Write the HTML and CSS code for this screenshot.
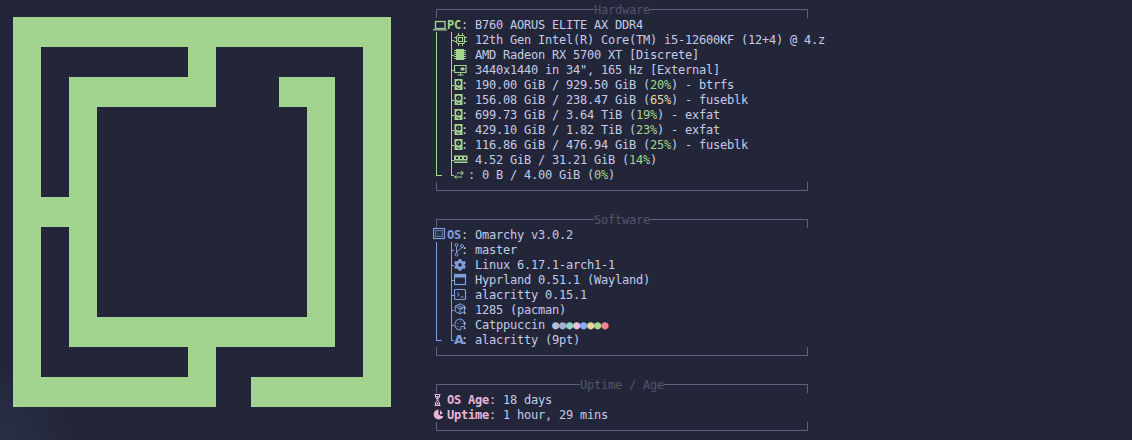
FILE: index.html
```html
<!DOCTYPE html>
<html lang="en">
<head>
<meta charset="utf-8">
<title>fastfetch</title>
<link rel="stylesheet" href="styles.css">
</head>
<body>
<svg class="sprite" width="0" height="0" aria-hidden="true">
  <symbol id="i-laptop" viewBox="0 0 14 15"><rect x="2.500" y="4.500" width="9.500" height="7" fill="none" stroke="currentColor" stroke-width="1.300"/><path d="M0 12.300h14v1.200H0z" fill="currentColor"/></symbol>
  <symbol id="i-cpu" viewBox="0 0 14 15"><rect x="2.500" y="3.500" width="8" height="8" rx="2" fill="none" stroke="currentColor" stroke-width="1.200"/><rect x="4.500" y="5.500" width="4" height="4" fill="none" stroke="currentColor"/><path d="M0 5.500h2M0 9.500h2M11 5.500h2M11 9.500h2M4.500 1v2M8.500 1v2M4.500 12v2M8.500 12v2" stroke="currentColor"/></symbol>
  <symbol id="i-gpu" viewBox="0 0 14 15"><rect x="2" y="2" width="8" height="11" fill="currentColor"/><path d="M0 3.500h2M0 5.500h2M0 7.500h2M0 9.500h2M0 11.500h2M10 3.500h2M10 5.500h2M10 7.500h2M10 9.500h2M10 11.500h2" stroke="currentColor"/></symbol>
  <symbol id="i-display" viewBox="0 0 14 15"><path d="M.5 3.500h11.500v7H.5z" fill="none" stroke="currentColor" stroke-width="1.200"/><path d="M3.500 13h6M6.500 10.500v2.500M7 6h3v2H7z" stroke="currentColor" fill="currentColor"/></symbol>
  <symbol id="i-disk" viewBox="0 0 14 15"><path fill-rule="evenodd" d="M.5 2h8v11h-8zM4.500 3.500a2.500 2.500 0 1 0 0 5 2.500 2.500 0 0 0 0-5zM4.500 5.300a.7.7 0 1 1 0 1.400.7.7 0 0 1 0-1.400zM2.500 10v1h1v-1zM5.500 10l-2 2h2z" fill="currentColor"/></symbol>
  <symbol id="i-ram" viewBox="0 0 14 15"><path fill-rule="evenodd" d="M0 3.500h13.500v5H0zM2 5v2h2V5zM6 5v2h2V5zM10 5v2h2V5z" fill="currentColor"/><path d="M0 9.500h13.500V11H0z" fill="currentColor"/></symbol>
  <symbol id="i-swap" viewBox="0 0 14 15"><path d="M3 6h6M7 4l2.500 2L7 8M8 10H0.500M2.500 8.500.5 10l2 1.500" fill="none" stroke="currentColor"/></symbol>
  <symbol id="i-os" viewBox="0 0 14 15"><rect x=".5" y="1.500" width="11" height="10" fill="none" stroke="currentColor" stroke-width="1.200"/><rect x="2.500" y="3.500" width="7" height="6" fill="currentColor" fill-opacity=".15" stroke="currentColor" stroke-opacity=".6"/></symbol>
  <symbol id="i-branch" viewBox="0 0 14 15"><circle cx="2.500" cy="3" r="1.500" fill="none" stroke="currentColor"/><circle cx="2.500" cy="12.500" r="1.500" fill="none" stroke="currentColor"/><circle cx="8" cy="4" r="1.500" fill="none" stroke="currentColor"/><path d="M2.500 4.500V11M7.500 5.500C7 8 3.500 7.500 2.500 10.500" fill="none" stroke="currentColor"/></symbol>
  <symbol id="i-gear" viewBox="0 0 14 15"><path transform="translate(-.3 .7) scale(.9)" fill-rule="evenodd" d="M5.500 1.500h3l.4 1.800 1.500.8 1.700-.6 1.400 2.500-1.300 1.200v1.600l1.300 1.200-1.400 2.500-1.700-.6-1.500.8-.4 1.800h-3l-.4-1.800-1.500-.8-1.700.6L.5 10l1.300-1.200V7.200L.5 6l1.400-2.500 1.700.6 1.500-.8zM7 6a2 2 0 1 0 0 4 2 2 0 0 0 0-4z" fill="currentColor"/></symbol>
  <symbol id="i-window" viewBox="0 0 14 15"><rect x=".5" y="2.500" width="11" height="10" fill="none" stroke="currentColor" stroke-width="1.200"/><path d="M.5 3h11v2.500H.5z" fill="currentColor"/></symbol>
  <symbol id="i-term" viewBox="0 0 14 15"><rect x=".5" y="2.500" width="11" height="10" rx="1" fill="none" stroke="currentColor" stroke-width="1.200"/><path d="M3 5.500 5.500 7.500 3 9.500M6.500 10h3" fill="none" stroke="currentColor"/></symbol>
  <symbol id="i-box" viewBox="0 0 14 15"><path transform="translate(0 .5) scale(.85 .85)" d="M7 1.500 12.500 4.500v6L7 13.500 1.500 10.500v-6zM1.500 4.500 7 7.500l5.500-3M7 7.500v6M4 3l5.500 3.200v3" fill="none" stroke="currentColor" stroke-width="1.200"/></symbol>
  <symbol id="i-palette" viewBox="0 0 14 15"><path transform="translate(-.5 0) scale(.9 1)" d="M7 2a5.500 5.500 0 1 0 0 11c1.500 0 1.500-1 1-1.800-.5-1 .2-1.700 1.200-1.700h2C12.500 9.500 12.500 8.500 12.500 7.500 12.500 4.500 10 2 7 2z" fill="none" stroke="currentColor" stroke-width="1.100"/><path d="M3.500 6h1v1h-1zM6 4h1v1H6zM8.500 6h1v1h-1zM3 9h1v1H3z" fill="currentColor"/></symbol>
  <symbol id="i-hourglass" viewBox="0 0 14 15"><path d="M1.500 2.500h6M1.500 13.500h6M2.500 2.500v2.500L4.500 8l-2 3v2.500M6.500 2.500v2.500L4.500 8l2 3v2.500" fill="none" stroke="currentColor"/><path d="M3 4h3L4.500 7zM4.500 10 3 12.500h3z" fill="currentColor"/></symbol>
  <symbol id="i-clock" viewBox="0 0 14 15"><path d="M5.500 2.500a5 5 0 1 0 4.500 7.500L5.500 7.500zM7 3l3 3.500-3 1z" fill="currentColor"/><path d="M8.500 9h1.500v1.500H8.500z" fill="currentColor"/></symbol>
</svg>

<main class="screen">
  <div class="logo-col">
    <svg class="logo" width="378" height="390" viewBox="13 17 378 390" aria-hidden="true">
      <path fill-rule="evenodd" d="M13 17H391V407H251V377H363V47H216V107H97V317H307V107H279V77H335V347H216V407H13ZM41 47H188V77H69V197H41ZM41 227H69V347H188V377H41Z"/>
    </svg>
  </div>

  <div class="info">
    <section class="block hw">
      <header class="rule"><span class="title">Hardware</span></header>
      <div class="head"><svg class="ico big"><use href="#i-laptop"/></svg><b class="key">PC</b><span class="colon">:</span><span>B760 AORUS ELITE AX DDR4</span></div>
      <ul class="tree">
        <li class="row"><i class="trunk"></i><i class="branch"></i><svg class="ico"><use href="#i-cpu"/></svg><span class="gap"></span><span>12th Gen Intel(R) Core(TM) i5-12600KF (12+4) @ 4.z</span></li>
        <li class="row"><i class="trunk"></i><i class="branch"></i><svg class="ico"><use href="#i-gpu"/></svg><span class="gap"></span><span>AMD Radeon RX 5700 XT [Discrete]</span></li>
        <li class="row"><i class="trunk"></i><i class="branch"></i><svg class="ico"><use href="#i-display"/></svg><span class="gap"></span><span>3440x1440 in 34", 165 Hz [External]</span></li>
        <li class="row"><i class="trunk"></i><i class="branch"></i><svg class="ico"><use href="#i-disk"/></svg><span class="tight">:</span><span>190.00 GiB / 929.50 GiB (<em class="ok">20%</em>) - btrfs</span></li>
        <li class="row"><i class="trunk"></i><i class="branch"></i><svg class="ico"><use href="#i-disk"/></svg><span class="tight">:</span><span>156.08 GiB / 238.47 GiB (<em class="warn">65%</em>) - fuseblk</span></li>
        <li class="row"><i class="trunk"></i><i class="branch"></i><svg class="ico"><use href="#i-disk"/></svg><span class="tight">:</span><span>699.73 GiB / 3.64 TiB (<em class="ok">19%</em>) - exfat</span></li>
        <li class="row"><i class="trunk"></i><i class="branch"></i><svg class="ico"><use href="#i-disk"/></svg><span class="tight">:</span><span>429.10 GiB / 1.82 TiB (<em class="ok">23%</em>) - exfat</span></li>
        <li class="row"><i class="trunk"></i><i class="branch"></i><svg class="ico"><use href="#i-disk"/></svg><span class="tight">:</span><span>116.86 GiB / 476.94 GiB (<em class="ok">25%</em>) - fuseblk</span></li>
        <li class="row"><i class="trunk"></i><i class="branch"></i><svg class="ico"><use href="#i-ram"/></svg><span class="gap"></span><span>4.52 GiB / 31.21 GiB (<em class="ok">14%</em>)</span></li>
        <li class="row last"><i class="trunk"></i><i class="branch"></i><svg class="ico"><use href="#i-swap"/></svg><span class="wide">:</span><span>0 B / 4.00 GiB (<em class="ok">0%</em>)</span></li>
      </ul>
      <footer class="foot"></footer>
    </section>

    <section class="block sw">
      <header class="rule"><span class="title">Software</span></header>
      <div class="head"><svg class="ico big"><use href="#i-os"/></svg><b class="key">OS</b><span class="colon">:</span><span>Omarchy v3.0.2</span></div>
      <ul class="tree">
        <li class="row"><i class="trunk"></i><i class="branch"></i><svg class="ico"><use href="#i-branch"/></svg><span class="tight">:</span><span>master</span></li>
        <li class="row"><i class="trunk"></i><i class="branch"></i><svg class="ico"><use href="#i-gear"/></svg><span class="gap"></span><span>Linux 6.17.1-arch1-1</span></li>
        <li class="row"><i class="trunk"></i><i class="branch"></i><svg class="ico"><use href="#i-window"/></svg><span class="gap"></span><span>Hyprland 0.51.1 (Wayland)</span></li>
        <li class="row"><i class="trunk"></i><i class="branch"></i><svg class="ico"><use href="#i-term"/></svg><span class="gap"></span><span>alacritty 0.15.1</span></li>
        <li class="row"><i class="trunk"></i><i class="branch"></i><svg class="ico"><use href="#i-box"/></svg><span class="tight">:</span><span>1285 (pacman)</span></li>
        <li class="row"><i class="trunk"></i><i class="branch"></i><svg class="ico"><use href="#i-palette"/></svg><span class="tight">:</span><span>Catppuccin <span class="d1">●</span><span class="d2">●</span><span class="d3">●</span><span class="d4">●</span><span class="d5">●</span><span class="d6">●</span><span class="d7">●</span><span class="d8">●</span></span></li>
        <li class="row last"><i class="trunk"></i><i class="branch"></i><b class="ico glyph">A</b><span class="tight">:</span><span>alacritty (9pt)</span></li>
      </ul>
      <footer class="foot"></footer>
    </section>

    <section class="block age">
      <header class="rule"><span class="title">Uptime / Age</span></header>
      <div class="head"><svg class="ico big"><use href="#i-hourglass"/></svg><b class="key">OS Age</b><span class="colon">:</span><span>18 days</span></div>
      <div class="head"><svg class="ico big"><use href="#i-clock"/></svg><b class="key">Uptime</b><span class="colon">:</span><span>1 hour, 29 mins</span></div>
      <footer class="foot"></footer>
    </section>
  </div>
</main>
</body>
</html>
```
FILE: styles.css
```css
* { box-sizing: border-box; }

html, body {
  margin: 0;
  height: 100%;
  overflow: hidden;
}

body {
  background:
    radial-gradient(circle at 0 100%, #283048 0, rgba(40, 48, 72, 0) 70px),
    #232638;
  color: #c3cbe9;
  font: 12px/17px "DejaVu Sans Mono", "Liberation Mono", monospace;
  letter-spacing: -0.224px;
}

.sprite { position: absolute; }

.screen {
  display: flex;
  width: 1132px;
  height: 440px;
}

.logo-col {
  flex: 0 0 433px;
  padding: 17px 0 0 13px;
}

.logo { display: block; fill: #a3d48f; }

.info {
  flex: 0 0 375px;
  min-width: 0;
  padding-top: 2px;
  display: flex;
  flex-direction: column;
  gap: 15px;
}

.block { --tone: #a3d48f; --line: #5d6278; }
.sw { --tone: #7f9fdc; }
.age { --tone: #eab6d8; }

.rule {
  display: flex;
  height: 15px;
  margin-left: 3px;
  color: #50556b;
}

.rule::before,
.rule::after {
  content: "";
  flex: 1;
  margin-top: 7px;
  height: 8px;
  border-top: 1px solid var(--line);
}
.rule::before { border-left: 1px solid var(--line); }
.rule::after { border-right: 1px solid var(--line); }

.title { white-space: pre; }

.head {
  display: flex;
  height: 15px;
  white-space: pre;
}

.key { color: var(--tone); font-weight: 700; }
.colon { width: 14px; }

.ico {
  flex: 0 0 14px;
  width: 14px;
  height: 15px;
  color: var(--tone);
  display: block;
}
.glyph {
  font: 700 13px/16px "DejaVu Sans", sans-serif;
  letter-spacing: -3px;
  text-align: left;
}

.tree {
  list-style: none;
  margin: 0;
  padding: 0;
}

.row {
  display: flex;
  height: 15px;
  white-space: pre;
}

.row > * { flex-shrink: 0; }

.trunk,
.branch {
  display: block;
  height: 15px;
  background-repeat: no-repeat;
  background-image:
    linear-gradient(var(--tone), var(--tone)),
    linear-gradient(var(--tone), var(--tone));
  background-size: 1px 100%, 0 0;
  background-position: 0 0, 0 8px;
}

.trunk { width: 15px; margin-left: 3px; }

.branch {
  width: 3px;
  background-size: 1px 100%, 100% 1px;
}

.last .trunk {
  background-size: 1px 9px, 6px 1px;
}
.last .branch {
  background-size: 1px 9px, 100% 1px;
}

.gap { flex: 0 0 7px; }
.tight { flex: 0 0 14px; margin-left: -7px; }
.wide { flex: 0 0 14px; }

em { font-style: normal; }
.ok { color: #a3d48f; }
.warn { color: #eed49f; }

.foot { height: 15px; margin-left: 3px; }
.foot::after {
  content: "";
  display: block;
  height: 8px;
  border: 1px solid var(--line);
  border-top: 0;
}

.d1 { color: #b8c0e0; }
.d2 { color: #a5add0; }
.d3 { color: #8bd5ca; }
.d4 { color: #f0bfe0; }
.d5 { color: #8aadf4; }
.d6 { color: #eed49f; }
.d7 { color: #a6da95; }
.d8 { color: #ed8796; }
```
